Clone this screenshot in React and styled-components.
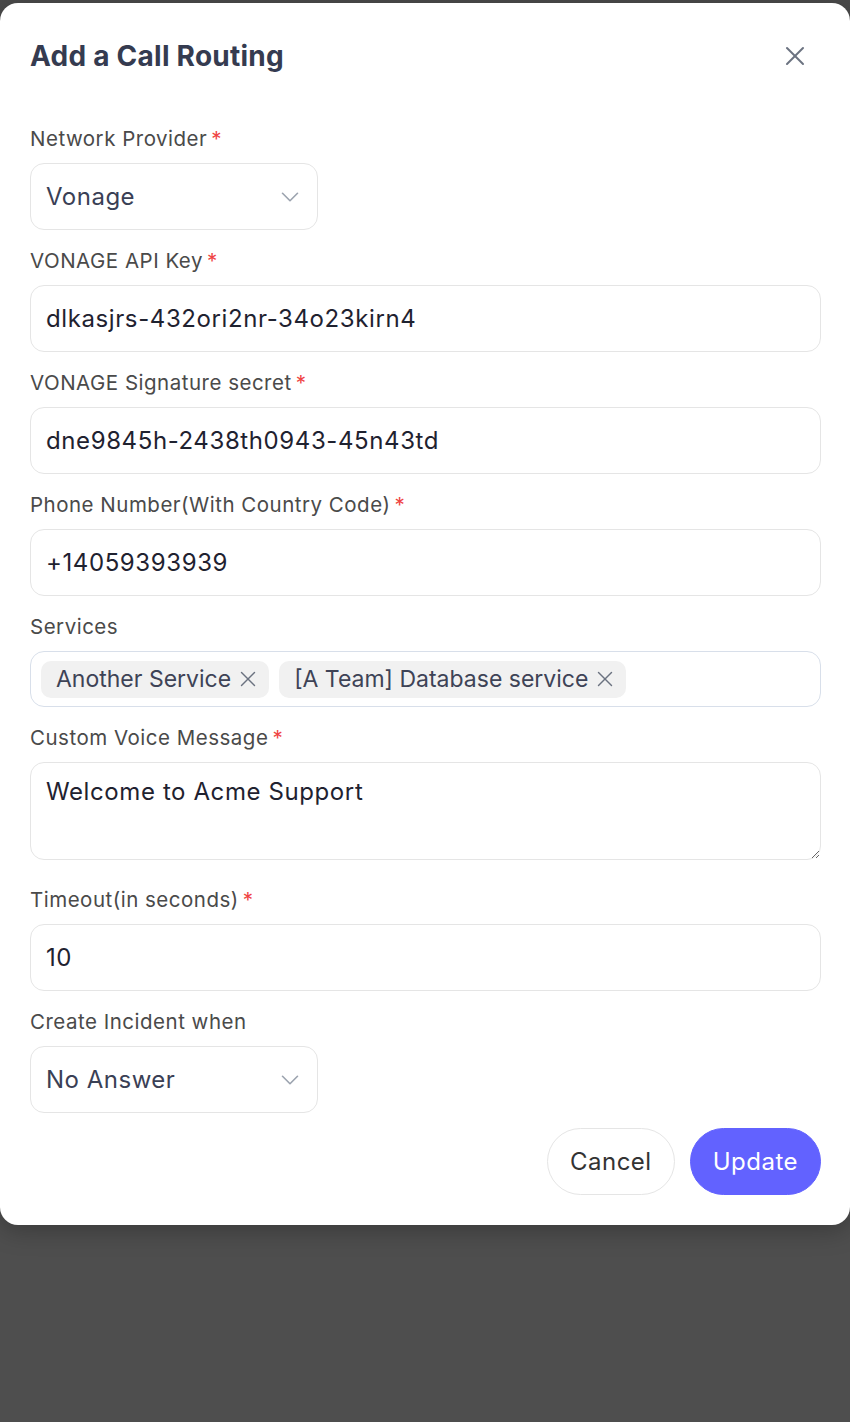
import styled, { createGlobalStyle } from "styled-components";
import { X, ChevronDown } from "lucide-react";

const Global = createGlobalStyle`
  html, body {
    margin: 0;
    padding: 0;
    background: #4e4e4e;
    font-family: Inter, "Noto Sans", sans-serif;
  }
  * { box-sizing: border-box; }
`;

const Backdrop = styled.div`
  min-height: 1422px;
  padding-top: 3px;
  background: linear-gradient(#4a4a4a, #4e4e4e 80px);
`;

const Modal = styled.div`
  background: #fff;
  border-radius: 18px;
  padding: 35px 29px 30px 30px;
  box-shadow: 0 6px 24px rgba(0, 0, 0, 0.25);
`;

const Header = styled.div`
  display: flex;
  align-items: center;
  justify-content: space-between;
  margin-bottom: 53px;
`;

const Title = styled.h2`
  margin: 0;
  font-size: 28px;
  line-height: 36px;
  font-weight: 700;
  letter-spacing: 0.25px;
  color: #353b50;
`;

const Close = styled.button`
  all: unset;
  display: flex;
  color: #6b7280;
  margin-right: 10px;
`;

const Form = styled.div`
  display: flex;
  flex-direction: column;
`;

const Field = styled.div`
  display: flex;
  flex-direction: column;
  margin-bottom: ${(p) => p.$gap ?? 19}px;
`;

const Label = styled.label`
  font-size: 20.5px;
  line-height: 24px;
  letter-spacing: 0.5px;
  color: #4a4a4a;
  margin-bottom: 12px;
  span {
    color: #ef4444;
    margin-left: 4px;
  }
`;

const Box = styled.div`
  height: 67px;
  border: 1px solid #e5e5e5;
  border-radius: 14px;
  display: flex;
  align-items: center;
  padding: 0 15px;
  font-size: 24px;
  letter-spacing: 0.5px;
  color: #1f2230;
`;

const Input = styled.input`
  height: 67px;
  width: 100%;
  border: 1px solid #e5e5e5;
  border-radius: 14px;
  padding: 0 15px;
  font-family: inherit;
  font-size: 24px;
  letter-spacing: 0.6px;
  color: #1f2230;
  outline: none;
`;

const Select = styled(Box)`
  width: 288px;
  justify-content: space-between;
  color: #3a4055;
  padding-right: 12px;
  svg { color: #9ca3af; }
`;

const Multi = styled(Box)`
  height: 56px;
  border-color: #d8dfea;
  padding: 0 10px;
  gap: 10px;
`;

const Chip = styled.div`
  display: flex;
  align-items: center;
  gap: 4px;
  height: 37px;
  padding: 0 8px 0 15px;
  background: #f1f1f1;
  border-radius: 10px;
  font-size: 23px;
  letter-spacing: 0;
  color: #3e4356;
  svg { color: #6b7280; }
`;

const TextArea = styled.textarea`
  height: 98px;
  width: 100%;
  border: 1px solid #e5e5e5;
  border-radius: 14px;
  padding: 14px 15px;
  font-family: inherit;
  font-size: 24px;
  letter-spacing: 0.6px;
  color: #1f2230;
  outline: none;
  resize: vertical;
  display: block;
`;

const Footer = styled.div`
  display: flex;
  justify-content: flex-end;
  gap: 15px;
  margin-top: 15px;
`;

const Button = styled.button`
  height: 67px;
  padding: 0 22px;
  border-radius: 999px;
  font-family: inherit;
  font-size: 24px;
  letter-spacing: 0.5px;
  cursor: pointer;
  border: 1px solid ${(p) => (p.$primary ? "#6262ff" : "#e5e5e5")};
  background: ${(p) => (p.$primary ? "#6262ff" : "#fff")};
  color: ${(p) => (p.$primary ? "#fff" : "#333")};
`;

function Req() {
  return <span>*</span>;
}

export default function App() {
  return (
    <>
      <Global />
      <Backdrop>
        <Modal>
          <Header>
            <Title>Add a Call Routing</Title>
            <Close aria-label="Close">
              <X size={32} strokeWidth={1.5} />
            </Close>
          </Header>
          <Form>
            <Field>
              <Label>Network Provider<Req /></Label>
              <Select>
                Vonage
                <ChevronDown size={30} strokeWidth={1.3} />
              </Select>
            </Field>
            <Field>
              <Label>VONAGE API Key<Req /></Label>
              <Input defaultValue="dlkasjrs-432ori2nr-34o23kirn4" />
            </Field>
            <Field>
              <Label>VONAGE Signature secret<Req /></Label>
              <Input defaultValue="dne9845h-2438th0943-45n43td" />
            </Field>
            <Field>
              <Label>Phone Number(With Country Code)<Req /></Label>
              <Input defaultValue="+14059393939" />
            </Field>
            <Field>
              <Label>Services</Label>
              <Multi>
                <Chip>
                  Another Service
                  <X size={26} strokeWidth={1.3} />
                </Chip>
                <Chip>
                  [A Team] Database service
                  <X size={26} strokeWidth={1.3} />
                </Chip>
              </Multi>
            </Field>
            <Field $gap={28}>
              <Label>Custom Voice Message<Req /></Label>
              <TextArea defaultValue="Welcome to Acme Support" />
            </Field>
            <Field>
              <Label>Timeout(in seconds)<Req /></Label>
              <Input defaultValue="10" />
            </Field>
            <Field $gap={0}>
              <Label>Create Incident when</Label>
              <Select>
                No Answer
                <ChevronDown size={30} strokeWidth={1.3} />
              </Select>
            </Field>
          </Form>
          <Footer>
            <Button>Cancel</Button>
            <Button $primary>Update</Button>
          </Footer>
        </Modal>
      </Backdrop>
    </>
  );
}
